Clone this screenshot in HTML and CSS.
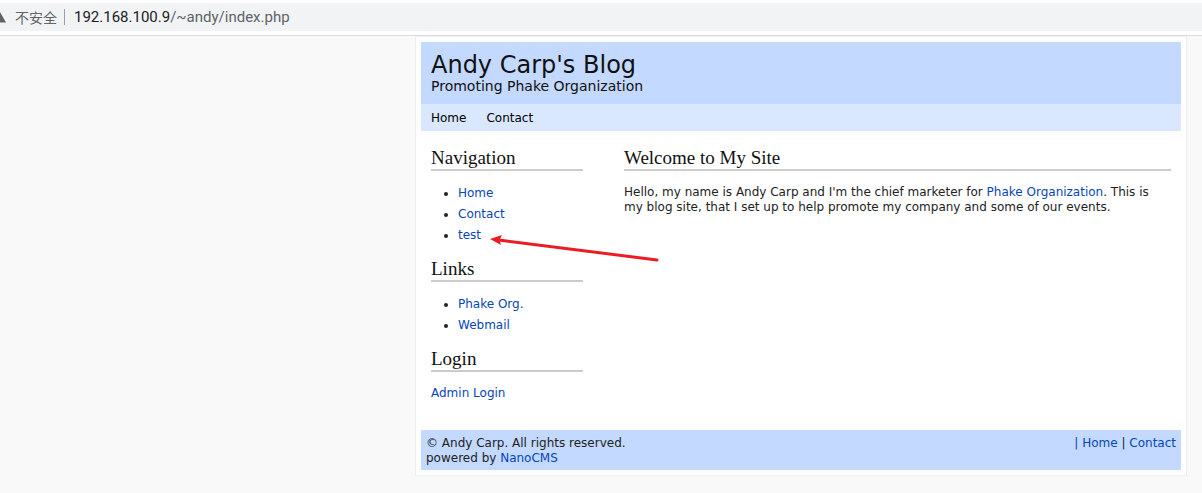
FILE: index.html
```html
<!DOCTYPE html>
<html lang="en">
<head>
<meta charset="utf-8">
<title>Andy Carp's Blog</title>
<link rel="stylesheet" href="styles.css">
</head>
<body>
<div class="browser-bar">
  <div class="address">
    <svg class="warning" width="6" height="12" viewBox="0 0 6 12" aria-hidden="true"><path d="M-7 11.500L-.5 0L6 11.500Z" fill="#5f6368"/></svg>
    <span class="insecure" lang="zh-CN">不安全</span>
    <span class="divider"></span>
    <span class="url"><span class="host">192.168.100.9</span>/~andy/index.php</span>
  </div>
</div>
<div class="page">
  <header class="banner">
    <h1 class="site-title">Andy Carp's Blog</h1>
    <p class="tagline">Promoting Phake Organization</p>
  </header>
  <nav class="top-nav">
    <a href="#home">Home</a>
    <a href="#contact">Contact</a>
  </nav>
  <div class="columns">
    <aside class="sidebar">
      <h2 class="heading">Navigation</h2>
      <ul class="link-list">
        <li><a href="#home">Home</a></li>
        <li><a href="#contact">Contact</a></li>
        <li class="marked"><a href="#test">test</a>
          <svg class="arrow" width="172" height="32" viewBox="0 0 172 32" aria-hidden="true"><path d="M9 6L167 26" stroke="#ed1c24" stroke-width="3" stroke-linecap="round"/><path d="M0 5L12 1L9.500 6L11 11Z" fill="#ed1c24"/></svg>
        </li>
      </ul>
      <h2 class="heading">Links</h2>
      <ul class="link-list">
        <li><a href="#phake">Phake Org.</a></li>
        <li><a href="#webmail">Webmail</a></li>
      </ul>
      <h2 class="heading">Login</h2>
      <p class="text"><a href="#login">Admin Login</a></p>
    </aside>
    <main class="content">
      <h2 class="heading">Welcome to My Site</h2>
      <p class="text">Hello, my name is Andy Carp and I'm the chief marketer for <a href="#phake">Phake Organization</a>. This is my blog site, that I set up to help promote my company and some of our events.</p>
    </main>
  </div>
  <footer class="footer">
    <div>© Andy Carp. All rights reserved.<br>powered by <a href="#nanocms">NanoCMS</a></div>
    <div><a href="#home">| Home</a> | <a href="#contact">Contact</a></div>
  </footer>
</div>
</body>
</html>
```

FILE: styles.css
```css
body {
  margin: 0;
  background: #f9f9f9;
  color: #222;
  font: 12px/15px Verdana, "DejaVu Sans", sans-serif;
}

a {
  color: #0645ba;
  text-decoration: none;
}

.browser-bar {
  padding: 3px 0 4px;
  background: #fff;
  border-bottom: 1px solid #dadce0;
}

.address {
  display: flex;
  align-items: center;
  height: 28px;
  background: #f1f3f4;
  color: #5f6368;
  font: 15px/20px Roboto, "Noto Sans CJK SC", sans-serif;
}

.insecure {
  margin-left: 9px;
  font: 14px/20px "Noto Sans CJK SC", sans-serif;
}

.divider {
  width: 1px;
  height: 16px;
  margin: 0 9px 0 7px;
  background: #9aa0a6;
}

.host {
  color: #202124;
}

.page {
  max-width: 760px;
  margin: 0 15px 0 auto;
  padding: 5px;
  background: #fff;
  border: 1px solid #eee;
}

.banner {
  padding: 11px 10px 10px;
  background: #c3d9ff;
  color: #111;
}

.site-title {
  margin: 0;
  font-size: 24px;
  line-height: 25px;
  font-weight: 400;
}

.tagline {
  margin: 0;
  font-size: 14px;
  line-height: 16px;
}

.top-nav {
  display: flex;
  gap: 20px;
  padding: 7px 10px 5px;
  background: #d9e7ff;
}

.top-nav a {
  color: #000;
}

.columns {
  display: grid;
  grid-template-columns: 152px 1fr;
  gap: 41px;
  padding: 15px 10px 30px;
}

.heading {
  margin: 0;
  border-bottom: 2px solid #ccc;
  color: #111;
  font: 400 19px/23px Georgia, "Liberation Serif", serif;
}

.link-list {
  margin: 12px 0 11px;
  padding-left: 27px;
  line-height: 21px;
}

.marked {
  position: relative;
}

.arrow {
  position: absolute;
  top: 9px;
  left: 32px;
}

.text {
  margin: 14px 0 0;
}

.sidebar .text {
  margin-bottom: -1px;
}

.footer {
  display: flex;
  justify-content: space-between;
  padding: 6px 5px 4px;
  background: #c3d9ff;
}
```
